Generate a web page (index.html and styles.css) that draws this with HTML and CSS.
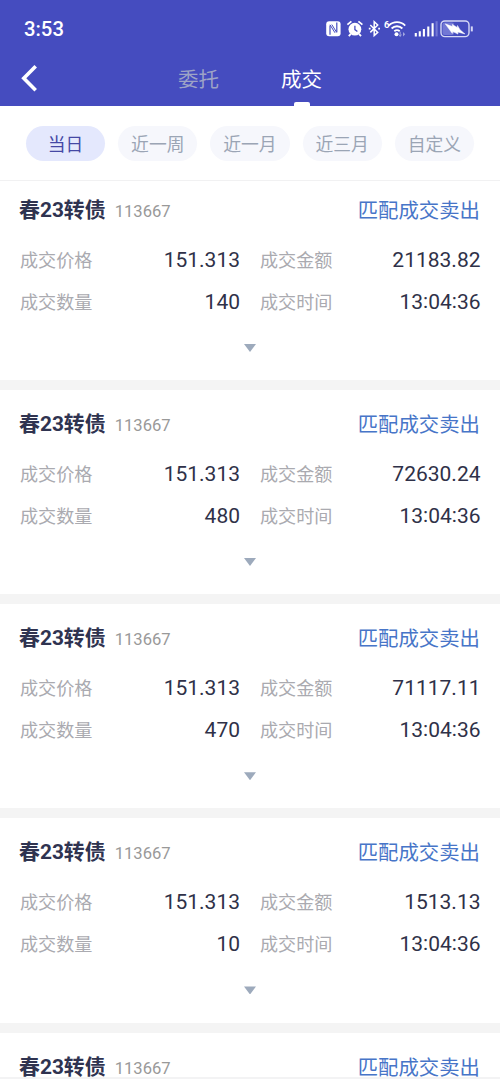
FILE: index.html
```html
<!DOCTYPE html>
<html lang="zh-CN">
<head>
<meta charset="utf-8">
<title>成交</title>
<link rel="stylesheet" href="styles.css">
</head>
<body>
<div class="screen">
<header class="top">
  <div class="status">
    <span class="clock">3:53</span>
    <svg class="status-icons" width="150" height="22" viewBox="0 0 150 22" fill="none" stroke="#fff" stroke-width="1.5">
      <rect x="1.2" y="3.2" width="14.4" height="15" rx="3" fill="#fff" stroke="none"/>
      <path d="M5 16.8V7.5M11.8 4.5v9.5" stroke="#454cbf" stroke-width="1.2"/>
      <path d="M5 6.8L10 14.8M6.8 6.6L11.8 14.6" stroke="#454cbf" stroke-width="1"/>
      <circle cx="29.9" cy="11.2" r="6.4" fill="#fff" stroke="none"/>
      <path d="M22.4 6.6l4-3.2M37.4 6.6l-4-3.2" stroke-width="1.8"/>
      <path d="M25.8 15.8l-2 2.3M34 15.8l2 2.3" stroke-width="1.8"/>
      <path d="M29.9 7.8v3.8l2.5 2" stroke="#454cbf" stroke-width="1.3"/>
      <path d="M45.3 7l7.4 7.4-3.5 3.2V3.8l3.5 3.2-7.4 7.4" stroke-width="1.5"/>
      <path d="M43.8 10.7h1.8M53.2 10.7H55" stroke-width="1.8"/>
      <path d="M63.8 7.6a11.5 11.5 0 0 1 16.4 0M66.6 10.5a7.6 7.6 0 0 1 10.8 0M69.3 13.3a4.2 4.2 0 0 1 5.4 0" stroke-width="1.8"/>
      <circle cx="71.5" cy="16.2" r="2" fill="#fff" stroke="none"/>
      <path d="M75.2 13.7v4.8M74 16.6l1.2 1.7 1.2-1.7" stroke="#a2a6df" stroke-width="1"/>
      <path d="M78 13.9l2.2 2.3-2.2 2.3z" fill="#a2a6df" stroke="none"/>
      <path d="M90.8 14.9v3.5M94.8 13.2v5.2M98.9 11v7.4M103.3 8.5v9.9" stroke-width="2.1"/>
      <path d="M107.6 5.2v13.2" stroke-width="2.1"/>
      <path d="M111.6 3.2v15.2" stroke="#7378d5" stroke-width="2.1"/>
      <rect x="116" y="3" width="28" height="15.6" rx="3.8" stroke="#d5d7f5" stroke-width="1.4"/>
      <rect x="117.5" y="4.5" width="11.5" height="12.6" rx="2" fill="#7378d5" stroke="none"/>
      <path d="M120.2 5.8l7.3 2.8-.2-2.2 5 3.1.2-2 2.5 4.2 4.9 4.2-7.1-1.8.2 2-5.2-2.5-.5 1.8z" fill="#fff" stroke="#fff" stroke-width=".5"/>
      <path d="M146.8 8.4v5" stroke="#d5d7f5" stroke-width="2"/>
    </svg>
    <span class="wifi-gen">6</span>
  </div>
  <nav class="nav">
    <svg class="back" width="18" height="28" viewBox="0 0 18 28" fill="none" stroke="#fff" stroke-width="3.6"><path d="M15.7 2.2L3.8 14.2l11.9 12"/></svg>
    <span class="tab">委托</span>
    <span class="tab tab-on">成交</span>
  </nav>
</header>
<div class="filters">
  <span class="pill pill-on">当日</span>
  <span class="pill">近一周</span>
  <span class="pill">近一月</span>
  <span class="pill">近三月</span>
  <span class="pill">自定义</span>
</div>
<main class="list">
  <section class="card">
    <div class="head"><b class="name">春23转债</b><span class="code">113667</span><span class="side">匹配成交卖出</span></div>
    <div class="grid">
      <span class="label">成交价格</span><span class="value">151.313</span><span class="label">成交金额</span><span class="value">21183.82</span>
      <span class="label">成交数量</span><span class="value">140</span><span class="label">成交时间</span><span class="value">13<i class="colon">:</i>04<i class="colon">:</i>36</span>
    </div>
    <i class="more"></i>
  </section>
  <section class="card">
    <div class="head"><b class="name">春23转债</b><span class="code">113667</span><span class="side">匹配成交卖出</span></div>
    <div class="grid">
      <span class="label">成交价格</span><span class="value">151.313</span><span class="label">成交金额</span><span class="value">72630.24</span>
      <span class="label">成交数量</span><span class="value">480</span><span class="label">成交时间</span><span class="value">13<i class="colon">:</i>04<i class="colon">:</i>36</span>
    </div>
    <i class="more"></i>
  </section>
  <section class="card">
    <div class="head"><b class="name">春23转债</b><span class="code">113667</span><span class="side">匹配成交卖出</span></div>
    <div class="grid">
      <span class="label">成交价格</span><span class="value">151.313</span><span class="label">成交金额</span><span class="value">71117.11</span>
      <span class="label">成交数量</span><span class="value">470</span><span class="label">成交时间</span><span class="value">13<i class="colon">:</i>04<i class="colon">:</i>36</span>
    </div>
    <i class="more"></i>
  </section>
  <section class="card">
    <div class="head"><b class="name">春23转债</b><span class="code">113667</span><span class="side">匹配成交卖出</span></div>
    <div class="grid">
      <span class="label">成交价格</span><span class="value">151.313</span><span class="label">成交金额</span><span class="value">1513.13</span>
      <span class="label">成交数量</span><span class="value">10</span><span class="label">成交时间</span><span class="value">13<i class="colon">:</i>04<i class="colon">:</i>36</span>
    </div>
    <i class="more"></i>
  </section>
  <section class="card card-last">
    <div class="head"><b class="name">春23转债</b><span class="code">113667</span><span class="side">匹配成交卖出</span></div>
  </section>
</main>
<footer class="bottom-edge"></footer>
</div>
</body>
</html>
```
FILE: styles.css
```css
* { box-sizing: border-box; }
body {
  margin: 0;
  background: #fff;
  font-family: Roboto, "Noto Sans CJK SC", sans-serif;
}
.screen {
  display: flex;
  flex-direction: column;
  height: 1079px;
  overflow: hidden;
}
.top {
  flex: none;
  height: 106px;
  background: #454cbf;
  color: #fff;
}
.status {
  position: relative;
  display: flex;
  align-items: center;
  justify-content: space-between;
  height: 58px;
  padding: 0 25px 0 24px;
}
.clock {
  font-size: 20.3px;
  font-weight: 500;
  line-height: 24px;
}
.wifi-gen {
  position: absolute;
  left: 384px;
  top: 19px;
  font-size: 9.5px;
  font-weight: 700;
  line-height: 11px;
}
.nav {
  display: flex;
  height: 48px;
  padding-left: 20px;
}
.back { margin: 6px 140px 0 0; }
.tab {
  width: 41px;
  height: 48px;
  margin-right: 62px;
  font-family: "Noto Sans CJK SC", sans-serif;
  font-size: 20.5px;
  line-height: 41px;
  white-space: nowrap;
  color: #9da3c6;
}
.tab-on {
  display: flex;
  flex-direction: column;
  align-items: center;
  color: #fff;
}
.tab-on::after {
  content: "";
  width: 16px;
  height: 4px;
  margin-top: 3px;
  border-radius: 2px 2px 0 0;
  background: #fff;
}
.filters {
  flex: none;
  display: flex;
  gap: 13px;
  height: 75px;
  padding: 20px 0 0 26px;
  border-bottom: 1px solid #f1f1f2;
}
.pill {
  width: 79.2px;
  height: 35px;
  border-radius: 18px;
  background: #f6f7fc;
  color: #9ba5b5;
  font-family: "Noto Sans CJK SC", sans-serif;
  font-size: 17.8px;
  line-height: 34px;
  text-align: center;
  white-space: nowrap;
}
.pill-on {
  background: #e4e8fd;
  color: #4548a5;
}
.list {
  flex: 1;
  min-height: 0;
}
.card {
  height: 214.2px;
  padding: 18px 20px 0;
  border-bottom: 10px solid #f4f4f4;
}
.card:first-child {
  height: 209px;
  padding-top: 13px;
}
.card-last {
  height: 44px;
  border-bottom: 0;
}
.head {
  display: flex;
  align-items: center;
  height: 30px;
}
.name {
  margin: 2px 0 0 -1px;
  font-size: 20.9px;
  font-weight: 700;
  line-height: 30px;
  color: #2f3350;
}
.code {
  margin: 6px 0 0 9px;
  font-size: 16.6px;
  line-height: 24px;
  color: #999;
}
.side {
  margin-left: auto;
  font-family: "Noto Sans CJK SC", sans-serif;
  font-size: 20.4px;
  line-height: 30px;
  color: #4775c8;
}
.grid {
  display: grid;
  grid-template-columns: 80px 140px 80px 140.5px;
  grid-template-columns: 80px 140px 100px 140.5px;
  grid-template-rows: 42px 42px;
  align-items: center;
  margin-top: 14px;
}
.label {
  font-family: "Noto Sans CJK SC", sans-serif;
  font-size: 18.1px;
  line-height: 27px;
  white-space: nowrap;
  color: #aaaab0;
}
.label:nth-child(4n + 3) { margin-left: 20px; }
.value {
  padding-top: 2px;
  font-size: 21px;
  line-height: 30px;
  text-align: right;
  color: #2f3148;
}
.colon {
  position: relative;
  top: -1px;
  font-style: normal;
}
.more {
  display: block;
  width: 12px;
  height: 8px;
  margin: 22px auto 0;
  background: #9daabc;
  clip-path: polygon(0 0, 100% 0, 50% 100%);
}
.bottom-edge {
  flex: none;
  height: 2px;
  background: #f3f3f4;
}
```
